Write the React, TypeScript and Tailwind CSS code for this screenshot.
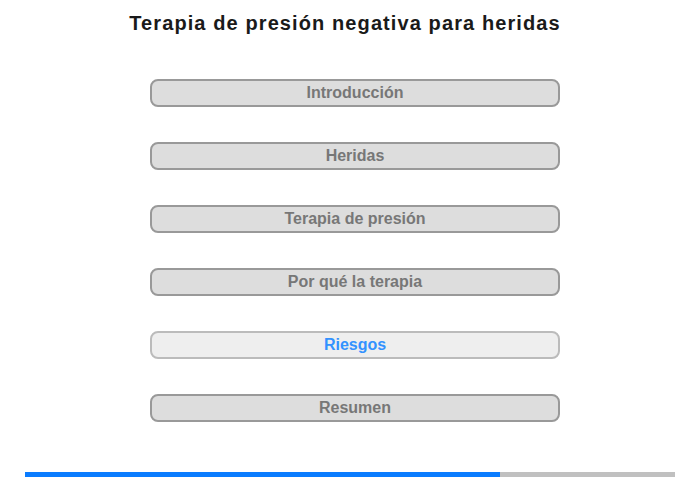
const SECTIONS = [
  { label: 'Introducción', active: false },
  { label: 'Heridas', active: false },
  { label: 'Terapia de presión', active: false },
  { label: 'Por qué la terapia', active: false },
  { label: 'Riesgos', active: true },
  { label: 'Resumen', active: false },
]

export default function App() {
  const progress = 73

  return (
    <div className="w-[700px] h-[480px] bg-white font-['Liberation_Sans',Arial,sans-serif] flex flex-col">
      <h1 className="pt-[11px] text-center text-[20px] leading-[24px] font-bold tracking-[1.1px] text-[#1a1a1a] pr-[10px]">
        Terapia de presión negativa para heridas
      </h1>

      <div className="mt-[44px] flex flex-col items-center gap-[35px] pl-[10px]">
        {SECTIONS.map((s) => (
          <button
            key={s.label}
            className={
              s.active
                ? 'w-[410px] h-[28px] rounded-[8px] border-2 border-[#bbbbbb] bg-[#eeeeee] text-[#3392ff] text-[16px] font-bold leading-none'
                : 'w-[410px] h-[28px] rounded-[8px] border-2 border-[#999999] bg-[#dddddd] text-[#777777] text-[16px] font-bold leading-none'
            }
          >
            {s.label}
          </button>
        ))}
      </div>

      <div className="mt-auto mb-[3px] mx-[25px] h-[5px] bg-[#c0c0c0]">
        <div className="h-full bg-[#0a7cff]" style={{ width: `${progress}%` }} />
      </div>
    </div>
  )
}
